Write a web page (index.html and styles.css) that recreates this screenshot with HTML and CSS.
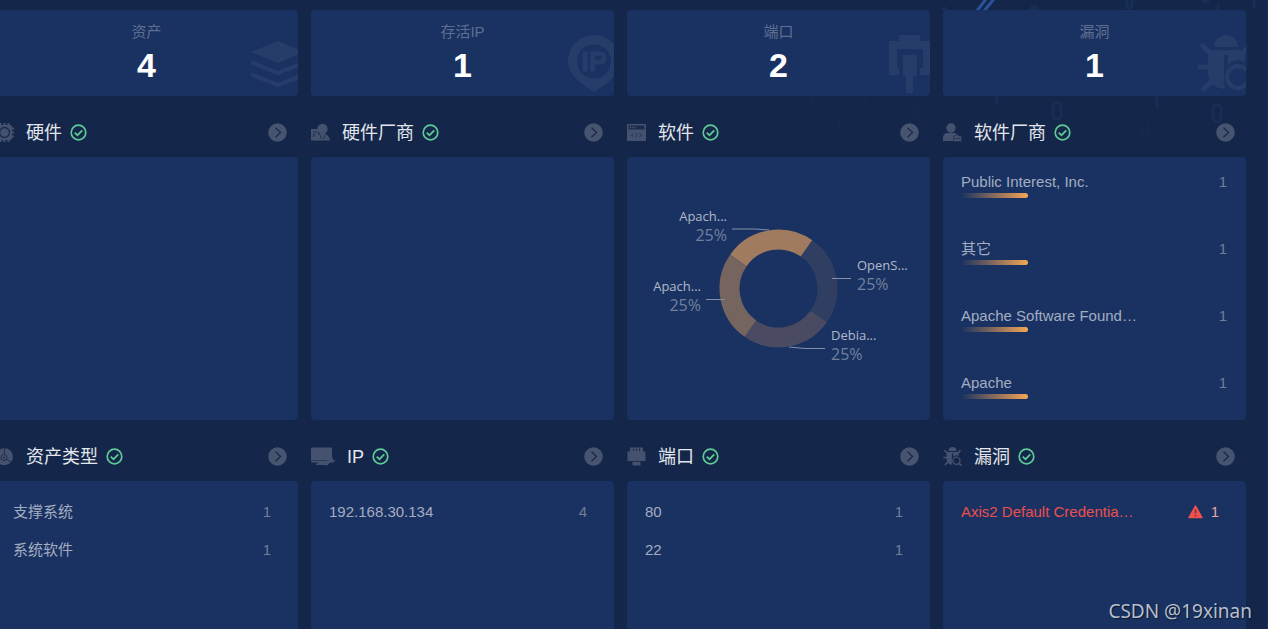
FILE: index.html
```html
<!DOCTYPE html>
<html lang="zh-CN">
<head>
<meta charset="utf-8">
<title>资产概览</title>
<link rel="stylesheet" href="styles.css">
</head>
<body>
<svg class="defs" aria-hidden="true">
  <symbol id="check" viewBox="0 0 17 17"><circle cx="8.500" cy="8.500" r="7.300" fill="none" stroke="currentColor" stroke-width="1.700"/><path d="M4.700 8.600l2.800 2.600 4.800-4.800" fill="none" stroke="currentColor" stroke-width="1.700"/></symbol>
  <symbol id="arrow" viewBox="0 0 19 19"><circle cx="9.500" cy="9.500" r="9.300" fill="#475470"/><path d="M7.500 4.700l5 4.800-5 4.800" fill="none" stroke="#1b2b4d" stroke-width="1.400"/></symbol>
  <symbol id="bug" viewBox="0 0 58 58">
    <path d="M17 12a12 12 0 0 1 24 0z" fill="currentColor"/>
    <path d="M14 15H45L48 18V27A14 14 0 0 0 31 30V20H27V54Q11 52 11 38V18z" fill="currentColor"/>
    <path d="M6 11l8 8M52 11l-7 8M3 32h11M7 54l9-9" stroke="currentColor" stroke-width="5" stroke-linecap="round"/>
    <path d="M27 47Q27 52 29 54H27z" fill="currentColor"/>
    <circle cx="41" cy="42" r="11" fill="none" stroke="currentColor" stroke-width="4"/>
    <path d="M49 50l6 6" stroke="currentColor" stroke-width="5" stroke-linecap="round"/>
  </symbol>
</svg>
<svg class="backdrop" viewBox="0 0 470 160" aria-hidden="true">
  <path d="M180 11L189 -1M187 11L197 -1" stroke="#2a5499" stroke-width="3"/>
  <g fill="none" stroke="#172e55" stroke-width="3">
    <rect x="256" y="102" width="8" height="17" rx="4"/>
    <rect x="416" y="105" width="8" height="17" rx="4"/>
    <rect x="330" y="-8" width="5" height="16" rx="2"/>
    <path d="M200 95v9M360 96v11M449 44v26M421 4v6M457 0v9"/>
  </g>
  <g fill="none" stroke="#15294e" stroke-width="2">
    <rect x="345" y="122" width="6" height="14" rx="3"/>
    <rect x="115" y="106" width="6" height="13" rx="3"/>
    <path d="M42 116v14M138 82v10M16 96v8M69 95v8M138 0v3"/>
  </g>
  <path d="M232 10a5 5 0 0 1 10 0zM144 10a3 3 0 0 1 7 0zM405 0h7v3h-7z" fill="#172e55"/>
</svg>
<main class="board">
  <section class="stat">
    <p class="stat-label">资产</p><p class="stat-value">4</p>
    <svg class="stat-icon" viewBox="0 0 58 58"><path d="M2 17L29 6L56 17L29 28z" fill="currentColor"/><path d="M4 28L29 38L54 28M4 40L29 50L54 40" fill="none" stroke="currentColor" stroke-width="4" stroke-linecap="round"/></svg>
  </section>
  <section class="stat">
    <p class="stat-label">存活IP</p><p class="stat-value">1</p>
    <svg class="stat-icon" viewBox="0 0 58 58"><path fill="currentColor" fill-rule="evenodd" d="M29 0A26 26 0 0 1 55 26C55 40 43 48 29 57C15 48 3 40 3 26A26 26 0 0 1 29 0zM29 9.500a17 17 0 1 0 .01 0z"/><text class="pin-text" x="29" y="36" text-anchor="middle">IP</text></svg>
  </section>
  <section class="stat">
    <p class="stat-label">端口</p><p class="stat-value">2</p>
    <svg class="stat-icon" viewBox="0 0 58 58"><path d="M18 0H39V6H50V40H39V33H42V14H16V33H18V40H8V6H18zM22 20H36V41H32V58H25V41H22z" fill="currentColor"/></svg>
  </section>
  <section class="stat">
    <p class="stat-label">漏洞</p><p class="stat-value">1</p>
    <svg class="stat-icon"><use href="#bug"/></svg>
  </section>

  <section class="block">
    <header class="head">
      <svg class="icon" viewBox="0 0 19 19"><rect x="2" y="2" width="15" height="15" rx="2" fill="currentColor"/><path d="M5.500 0v3M9.500 0v3M13.500 0v3M5.500 16v3M9.500 16v3M13.500 16v3M0 5.500h3M0 9.500h3M0 13.500h3M16 5.500h3M16 9.500h3M16 13.500h3" stroke="currentColor" stroke-width="2"/><circle cx="9.500" cy="9.500" r="5" fill="none" stroke="#1b2b4d" stroke-width="1.400"/></svg>
      <h2 class="title">硬件</h2><svg class="check"><use href="#check"/></svg>
      <button class="more" aria-label="查看硬件"><svg><use href="#arrow"/></svg></button>
    </header>
    <div class="panel"></div>
  </section>
  <section class="block">
    <header class="head">
      <svg class="icon" viewBox="0 0 19 19"><path d="M0 6h7v11.500H0z" fill="currentColor"/><path d="M2 9h4M2.500 14v-2.500h2" stroke="#1b2b4d" fill="none"/><path d="M5 17.500Q5 12 9 11L14 11Q18 12 19 17.500z" fill="currentColor"/><circle cx="11.500" cy="6" r="5.200" fill="currentColor"/><path d="M9 12l1.500 4M14 12l-1.500 4" stroke="#1b2b4d" stroke-width=".9" fill="none"/></svg>
      <h2 class="title">硬件厂商</h2><svg class="check"><use href="#check"/></svg>
      <button class="more" aria-label="查看硬件厂商"><svg><use href="#arrow"/></svg></button>
    </header>
    <div class="panel"></div>
  </section>
  <section class="block">
    <header class="head">
      <svg class="icon" viewBox="0 0 19 19"><path d="M1 1h17q1 0 1 1v15q0 1-1 1H1q-1 0-1-1V2q0-1 1-1z" fill="currentColor"/><path d="M1.500 2.500h16v4h-16z" fill="#1b2b4d"/><path d="M2.500 4.500h6" stroke="#475470" stroke-width="1.500" stroke-dasharray="1.500 .7"/><path d="M6.500 10.500L4.500 12.200l2 1.700M12.500 10.500l2 1.700-2 1.700M10.300 10l-1.600 4.500" fill="none" stroke="#24355a" stroke-width="1"/></svg>
      <h2 class="title">软件</h2><svg class="check"><use href="#check"/></svg>
      <button class="more" aria-label="查看软件"><svg><use href="#arrow"/></svg></button>
    </header>
    <div class="panel chart-panel">
      <svg class="chart" viewBox="0 0 303 263" role="img" aria-label="软件占比">
        <g fill="none" stroke-width="20">
          <circle cx="151.500" cy="131.500" r="49" pathLength="360" stroke-dasharray="90 270" transform="rotate(-145 151.500 131.500)" stroke="#a07b5f"/>
          <circle cx="151.500" cy="131.500" r="49" pathLength="360" stroke-dasharray="90 270" transform="rotate(-55 151.500 131.500)" stroke="#303f61"/>
          <circle cx="151.500" cy="131.500" r="49" pathLength="360" stroke-dasharray="90 270" transform="rotate(35 151.500 131.500)" stroke="#4a4b62"/>
          <circle cx="151.500" cy="131.500" r="49" pathLength="360" stroke-dasharray="90 270" transform="rotate(125 151.500 131.500)" stroke="#76655f"/>
        </g>
        <path class="leader" d="M105 72H128L142 73M205 121.500H224M162 190L178 191.500H198M79 142.500H98"/>
        <g class="name"><text x="100" y="64" text-anchor="end">Apach...</text><text x="74" y="134" text-anchor="end">Apach...</text><text x="230" y="113">OpenS...</text><text x="204" y="183">Debia...</text></g>
        <g class="share"><text x="100" y="84" text-anchor="end">25%</text><text x="74" y="154" text-anchor="end">25%</text><text x="230" y="133">25%</text><text x="204" y="203">25%</text></g>
      </svg>
    </div>
  </section>
  <section class="block">
    <header class="head">
      <svg class="icon" viewBox="0 0 19 19"><circle cx="8" cy="5" r="4.700" fill="currentColor"/><path d="M0 18V15Q0 10 5 10H11Q15 10 15 14V18z" fill="currentColor"/><path d="M10.500 13h2v-1h3.500v1h2.500v5.500h-8z" fill="currentColor" stroke="#1b2b4d" stroke-width=".6"/><path d="M11.500 15.500h6" stroke="#1b2b4d" stroke-width=".7"/></svg>
      <h2 class="title">软件厂商</h2><svg class="check"><use href="#check"/></svg>
      <button class="more" aria-label="查看软件厂商"><svg><use href="#arrow"/></svg></button>
    </header>
    <ul class="panel vendors">
      <li class="vendor"><div class="line"><span>Public Interest, Inc.</span><span class="count">1</span></div><div class="bar" style="width:25%"></div></li>
      <li class="vendor"><div class="line"><span>其它</span><span class="count">1</span></div><div class="bar" style="width:25%"></div></li>
      <li class="vendor"><div class="line"><span>Apache Software Found…</span><span class="count">1</span></div><div class="bar" style="width:25%"></div></li>
      <li class="vendor"><div class="line"><span>Apache</span><span class="count">1</span></div><div class="bar" style="width:25%"></div></li>
    </ul>
  </section>

  <section class="block">
    <header class="head">
      <svg class="icon" viewBox="0 0 19 19"><circle cx="9.500" cy="9.800" r="8.500" fill="currentColor"/><path d="M9.500 1v6M11 12l5.500 3.500" stroke="#1b2b4d" stroke-width=".9"/><circle cx="9" cy="10.500" r="3" fill="none" stroke="#1b2b4d" stroke-width=".9"/><circle cx="9" cy="10.500" r=".9" fill="#1b2b4d"/></svg>
      <h2 class="title">资产类型</h2><svg class="check"><use href="#check"/></svg>
      <button class="more" aria-label="查看资产类型"><svg><use href="#arrow"/></svg></button>
    </header>
    <ul class="panel rows">
      <li class="line"><span>支撑系统</span><span class="count">1</span></li>
      <li class="line"><span>系统软件</span><span class="count">1</span></li>
    </ul>
  </section>
  <section class="block">
    <header class="head">
      <svg class="icon wide" viewBox="0 0 24 19"><path d="M1 .500h19q1 0 1 1V11l-5 4.500H1q-1 0-1-1V1.500q0-1 1-1zM7 15.500h8v1h2V18H5v-1.500h2z" fill="currentColor"/><path d="M0 13.500h16" stroke="#1b2b4d" stroke-width=".6"/><path d="M15.500 17l5-4.500" stroke="currentColor" stroke-width="3" stroke-linecap="round"/><path d="M22 10l-2 2 1 1.500 3-1a3 3 0 0 1-5 2.500 3 3 0 0 1 3-5z" fill="currentColor"/></svg>
      <h2 class="title">IP</h2><svg class="check"><use href="#check"/></svg>
      <button class="more" aria-label="查看IP"><svg><use href="#arrow"/></svg></button>
    </header>
    <ul class="panel rows"><li class="line"><span>192.168.30.134</span><span class="count">4</span></li></ul>
  </section>
  <section class="block">
    <header class="head">
      <svg class="icon" viewBox="0 0 19 19"><path d="M3 .500h13v4h2q.5 0 .5.500v8.500q0 .500-.5.500H1q-.5 0-.5-.5V5q0-.5.500-.5h2zM5.500 14.800h8V18.500h-8z" fill="currentColor"/><path d="M6.500 1.500v2.500M12.500 1.500v2.500M9.500 1.500v2.500" stroke="#1b2b4d" stroke-width="1"/></svg>
      <h2 class="title">端口</h2><svg class="check"><use href="#check"/></svg>
      <button class="more" aria-label="查看端口"><svg><use href="#arrow"/></svg></button>
    </header>
    <ul class="panel rows">
      <li class="line"><span>80</span><span class="count">1</span></li>
      <li class="line"><span>22</span><span class="count">1</span></li>
    </ul>
  </section>
  <section class="block">
    <header class="head">
      <svg class="icon"><use href="#bug"/></svg>
      <h2 class="title">漏洞</h2><svg class="check"><use href="#check"/></svg>
      <button class="more" aria-label="查看漏洞"><svg><use href="#arrow"/></svg></button>
    </header>
    <ul class="panel rows">
      <li class="line danger"><span>Axis2 Default Credentia…</span><svg class="alert" viewBox="0 0 15 14"><path d="M7.500 1L14 12.500H1z" fill="#f0524b" stroke="#f0524b" stroke-width="1.400" stroke-linejoin="round"/><path d="M7.500 4.500v4M7.500 10v1.500" stroke="#7b3148" stroke-width="1.600"/></svg><span class="count">1</span></li>
    </ul>
  </section>
</main>
<p class="watermark">CSDN @19xinan</p>
</body>
</html>
```

FILE: styles.css
```css
* { box-sizing: border-box; margin: 0; padding: 0; }

body {
  position: relative;
  height: 100vh;
  overflow: hidden;
  background: #142649;
  border-right: 1px dotted #233b66;
  color: #a3adc1;
  font: 15px/24px "Liberation Sans", "Noto Sans CJK SC", sans-serif;
}

.defs { position: absolute; width: 0; height: 0; }

.backdrop { position: absolute; top: 0; right: 0; width: 470px; height: 160px; }

.board {
  position: relative;
  display: grid;
  grid-template-columns: repeat(4, minmax(0, 1fr));
  column-gap: 13px;
  margin-left: -5px;
  padding: 10px 21px 0 0;
}

.stat {
  position: relative;
  height: 86px;
  padding-top: 10px;
  overflow: hidden;
  border-radius: 4px;
  background: #1a3261;
  text-align: center;
}

.stat-label { color: #5f6f92; }
.stat-value { color: #fff; font-size: 34px; font-weight: bold; line-height: 42px; }
.stat-icon { position: absolute; top: 25px; right: -9px; width: 58px; height: 58px; color: #263d6a; }
.pin-text { fill: currentColor; stroke: currentColor; font-size: 27px; font-weight: bold; }

.head { display: flex; align-items: center; height: 61px; padding: 12px 11px 0 0; }
.icon { width: 19px; height: 19px; margin-right: 12px; color: #45526f; }
.icon.wide { width: 24px; }
.title { color: #e3e6ec; font-size: 18px; font-weight: normal; }
.check { width: 17px; height: 17px; margin-left: 8px; color: #5fca96; }
.more { width: 19px; height: 19px; margin-left: auto; border: 0; background: none; cursor: pointer; }
.more svg { display: block; width: 19px; height: 19px; }

.panel { height: 263px; border-radius: 4px; background: #1a3261; list-style: none; }

.chart { display: block; width: 100%; height: 100%; }
.leader { fill: none; stroke: #8390a9; }
.name, .share { font-family: "Open Sans", "Noto Sans", sans-serif; }
.name { fill: #b0b9ca; font-size: 13px; }
.share { fill: #71809f; font-size: 16px; }

.line { display: flex; align-items: center; }
.count { margin-left: auto; color: #6f7d9b; }

.vendors { padding: 12px 19px 0 18px; }
.vendor { height: 67px; }
.vendor .line { height: 24px; padding-top: 2px; }
.bar { height: 5px; border-radius: 3px; background: linear-gradient(90deg, #1a3261, #f5a556); }

.rows { padding: 12px 27px 0 18px; }
.rows .line { height: 38px; }

.danger { color: #ea4f4f; }
.alert { width: 15px; height: 14px; margin-left: auto; }
.danger .count { margin-left: 8px; color: #eba5a9; }

.watermark {
  position: absolute;
  right: 15px;
  bottom: 6px;
  color: #b7bfcd;
  font: 19px/24px "Noto Sans", sans-serif;
  text-shadow: 1px 1px 1px #0b1730;
}
```
